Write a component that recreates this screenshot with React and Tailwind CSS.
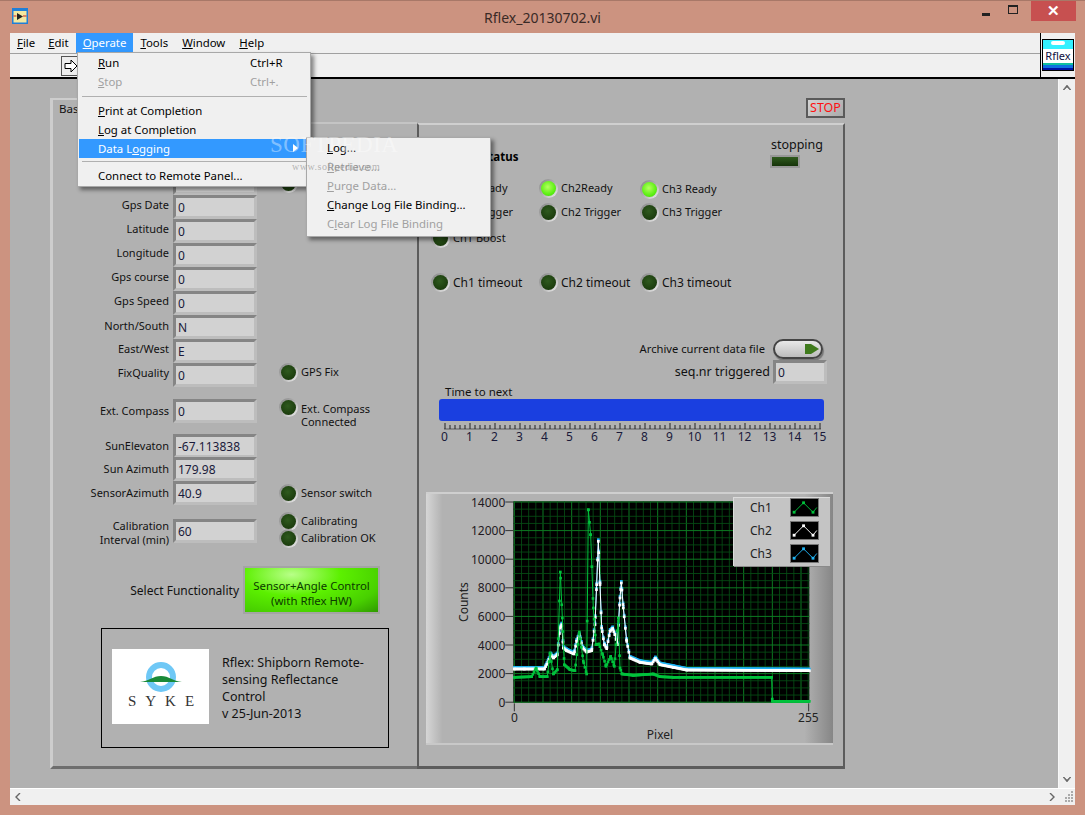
const font = "font-['Noto_Sans',sans-serif]"

// LabVIEW round LED
function Led({ on }) {
  return (
    <span className="flex h-[19px] w-[19px] shrink-0 items-center justify-center rounded-full bg-[linear-gradient(135deg,#858585,#b0b0b0_50%,#f2f2f2)]">
      <span className={on
        ? 'h-[15px] w-[15px] rounded-full bg-[radial-gradient(circle_at_45%_40%,#b4ff60,#5cf012_60%,#3cc808)]'
        : 'h-[15px] w-[15px] rounded-full bg-[radial-gradient(circle_at_45%_40%,#2f5a1e,#1c3d0e_70%,#122a08)]'} />
    </span>
  )
}

function Field({ value, className = 'w-[84px] h-[24px]' }) {
  return (
    <div className={`${className} shrink-0 border-[3px] border-t-[#858585] border-l-[#858585] border-r-[#bdbdbd] border-b-[#bdbdbd] bg-[#d2d2d2] pl-[2px] text-[12px] leading-[19px] text-[#1a1a3a]`}>
      {value}
    </div>
  )
}

function Row({ label, value, className = '', labelClass = 'pb-[4px]', children }) {
  return (
    <div className={`flex h-[24px] items-center ${className}`}>
      <div className={`w-[120px] pr-[1px] text-right text-[11px] leading-[14px] text-[#111] ${labelClass}`}>{label}</div>
      <div className="ml-[3px]"><Field value={value} /></div>
      {children}
    </div>
  )
}

function LedLabel({ text, on, className = '', textClass = 'text-[11px]' }) {
  return (
    <div className={`flex items-center gap-[3px] ${className}`}>
      <Led on={on} />
      <span className={`${textClass} whitespace-nowrap text-[#111]`}>{text}</span>
    </div>
  )
}

function MenuItem({ children, shortcut, disabled, active }) {
  return (
    <div className={`flex h-[19px] items-center pl-[19px] text-[11.4px] whitespace-nowrap ${active ? 'bg-[#3399ff] text-white' : disabled ? 'text-[#a0a0a0]' : 'text-black'}`}>
      <span className="w-[152px]">{children}</span>
      {shortcut && <span>{shortcut}</span>}
    </div>
  )
}

// spectrum traces, in zoomed chart coordinates
const ch2 = [[0,553],[30,553],[90,553],[102,530],[109,510],[117,520],[129,510],[137,430],[142,420],[147,490],[157,498],[179,508],[187,470],[195,450],[205,490],[217,502],[232,498],[242,420],[247,300],[252,170],[257,300],[262,430],[270,480],[277,492],[287,440],[295,432],[302,450],[309,480],[317,340],[321,295],[327,370],[337,470],[347,520],[377,533],[412,538],[423,522],[437,540],[477,548],[517,556],[885,558]]
const ch1 = [[0,578],[52,576],[65,550],[77,576],[99,576],[107,505],[117,568],[129,555],[138,262],[144,400],[150,540],[167,555],[182,558],[195,442],[207,530],[217,568],[222,75],[229,150],[237,370],[245,480],[254,478],[265,510],[275,545],[289,515],[300,545],[312,400],[317,550],[323,568],[357,572],[417,568],[437,576],[477,578],[772,578],[774,650],[885,650]]

function at(line, x) {
  for (let i = 1; i < line.length; i++) {
    if (x <= line[i][0]) {
      const [x0, y0] = line[i - 1]
      const [x1, y1] = line[i]
      return y0 + ((y1 - y0) * (x - x0)) / (x1 - x0)
    }
  }
  return line[line.length - 1][1]
}

function Trace({ line, color, dy = 0 }) {
  const samples = Array.from({ length: 255 }, (_, i) => [i * 3.47, at(line, i * 3.47)])
  const pts = [...samples, ...line].sort((a, b) => a[0] - b[0]).map(([x, y]) => [283 + x, y + dy])
  return (
    <g>
      <polyline points={pts.map(p => p.join(',')).join(' ')} fill="none" stroke={color} strokeWidth="3" />
      {pts.map((p, i) => <rect key={i} x={p[0] - 4} y={p[1] - 4} width="8" height="8" fill={color} />)}
    </g>
  )
}

function Chart() {
  const labels = ['14000', '12000', '10000', '8000', '6000', '4000', '2000', '0']
  const minorX = Array.from({ length: 42 }, (_, i) => 283 + i * 21.5)
  const minorY = Array.from({ length: 29 }, (_, i) => 52 + i * 21.45)
  return (
    <svg viewBox="18 22 1221 759" className="h-[253px] w-[407px]">
      <rect x="280" y="50" width="888" height="604" fill="#000" />
      {minorX.map(x => <line key={x} x1={x} x2={x} y1="50" y2="654" stroke={Math.round((x - 283) / 21.5) % 4 === 0 ? '#0d7a22' : '#064d14'} strokeWidth={Math.round((x - 283) / 21.5) % 4 === 0 ? 3 : 2.5} />)}
      {minorY.map(y => <line key={y} x1="280" x2="1168" y1={y} y2={y} stroke={Math.round((y - 52) / 21.45) % 4 === 0 ? '#0d7a22' : '#064d14'} strokeWidth={Math.round((y - 52) / 21.45) % 4 === 0 ? 3 : 2.5} />)}
      <Trace line={ch2} color="#20b4f4" dy={-5} />
      <Trace line={ch2} color="#ffffff" />
      <Trace line={ch1} color="#00c23c" />
      {labels.map((t, i) => (
        <g key={t}>
          <line x1="256" x2="280" y1={52 + i * 85.8} y2={52 + i * 85.8} stroke="#333" strokeWidth="3" />
          <text x="256" y={66 + i * 85.8} textAnchor="end" fontSize="36" fill="#221a22">{t}</text>
        </g>
      ))}
      <line x1="283" x2="283" y1="656" y2="680" stroke="#333" strokeWidth="3" />
      <line x1="1166" x2="1166" y1="656" y2="680" stroke="#333" strokeWidth="3" />
      <text x="283" y="712" textAnchor="middle" fontSize="36" fill="#222">0</text>
      <text x="1165" y="712" textAnchor="middle" fontSize="36" fill="#222">255</text>
      <text x="720" y="762" textAnchor="middle" fontSize="36" fill="#222">Pixel</text>
      <text x="143" y="352" textAnchor="middle" fontSize="36" fill="#222" transform="rotate(-90 143 352)">Counts</text>
    </svg>
  )
}

function Swatch({ color }) {
  return (
    <svg viewBox="0 0 28 18" className="h-[19px] w-[29px] border border-[#777] bg-black">
      <polyline points="3,14 13,4 23,14 27,9" fill="none" stroke={color} strokeWidth="1" />
      {[[3, 14], [13, 4], [23, 14]].map(([x, y]) => <rect key={x} x={x - 1.5} y={y - 1.5} width="3" height="3" fill={color} />)}
    </svg>
  )
}

function SykeLogo() {
  return (
    <div className="flex h-[75px] w-[97px] shrink-0 flex-col items-center bg-white pt-[13px]">
      <svg viewBox="0 0 44 30" className="h-[30px] w-[44px]">
        <circle cx="22" cy="15" r="12" fill="none" stroke="#6fc8f6" strokeWidth="6" />
        <path d="M1 20 C10 19 14 14 22 14 C30 14 34 19 43 20 Z" fill="#1a8a38" />
      </svg>
      <div className="mt-[1px] pl-[10px] font-['Liberation_Serif',serif] text-[15px] leading-[17px] tracking-[9px] text-[#333]">SYKE</div>
    </div>
  )
}

function TimeScale() {
  const ticks = Array.from({ length: 76 }, (_, i) => i)
  return (
    <div className="ml-[13px] w-[400px]">
      <svg viewBox="0 0 380 8" className="ml-[12px] h-[8px] w-[380px]">
        {ticks.map(i => <line key={i} x1={i * 5 + 1} x2={i * 5 + 1} y1={i % 5 === 0 ? 1 : 3} y2="7" stroke="#222" strokeWidth="1" />)}
        <line x1="0" x2="377" y1="7" y2="7" stroke="#222" strokeWidth="0.6" />
      </svg>
      <div className="flex text-[12px] leading-[14px] text-[#1a1a3a]">
        {ticks.filter(i => i % 5 === 0).map(i => <span key={i} className="w-[25px] text-center">{i / 5}</span>)}
      </div>
    </div>
  )
}

function LeftPanel() {
  return (
    <div className="relative h-[671px] w-[367px] shrink-0 border-b-[3px] border-l-[3px] border-b-[#6e6e6e] border-l-[#cdcdcd] pt-[73px]">
      {/* tab outline */}
      <div className="absolute -left-[3px] top-0 h-[2px] w-[120px] rounded-tl-[3px] bg-[#cdcdcd]" />
      <div className="absolute left-[110px] right-0 top-[24px] h-[2px] bg-[#c4c4c4]" />
      <div className="absolute left-[6px] top-[2px] text-[11.5px] text-[#111]">Basic</div>
      <div className="-ml-[3px]">
        <Row value="">
          <div className="ml-[22px]"><Led /></div>
        </Row>
        <Row label="Gps Date" value="0" />
        <Row label="Latitude" value="0" />
        <Row label="Longitude" value="0" />
        <Row label="Gps course" value="0" />
        <Row label="Gps Speed" value="0" />
        <Row label="North/South" value="N" labelClass="pb-[2px]" />
        <Row label="East/West" value="E" />
        <Row label="FixQuality" value="0">
          <LedLabel text="GPS Fix" className="mb-[5px] ml-[22px]" />
        </Row>
        <Row label="Ext. Compass" value="0" className="mt-[12px]" labelClass="">
          <div className="ml-[22px] flex items-start gap-[3px] pt-[4px]">
            <Led />
            <span className="whitespace-nowrap pt-[4px] text-[11px] leading-[13px] text-[#111]">Ext. Compass<br />Connected</span>
          </div>
        </Row>
        <Row label="SunElevaton" value="-67.113838" className="mt-[11px]" labelClass="" />
        <Row label="Sun Azimuth" value="179.98" className="-mt-[1px]" labelClass="" />
        <Row label="SensorAzimuth" value="40.9" labelClass="">
          <LedLabel text="Sensor switch" className="ml-[22px]" />
        </Row>
        <Row label={<>Calibration<br />Interval (min)</>} value="60" className="mt-[14px]" labelClass="pt-[4px]">
          <div className="mb-[2px] ml-[22px] flex flex-col">
            <LedLabel text="Calibrating" />
            <LedLabel text="Calibration OK" className="-mt-[2px]" />
          </div>
        </Row>
        <div className="mt-[23px] flex h-[48px] items-center">
          <div className="w-[193px] pr-[4px] pt-[2px] text-right text-[12px] text-[#111]">Select Functionality</div>
          <div className="flex h-[48px] w-[137px] flex-col items-center justify-center border-[2px] border-[#a4a4a4] bg-[radial-gradient(ellipse_at_35%_15%,#b8ff88,#5cf000_40%,#48d000_75%,#2f9a00)] pt-[6px] text-center text-[11.4px] leading-[15px] text-[#0b3a00]">
            <span>Sensor+Angle Control</span>
            <span>(with Rflex HW)</span>
          </div>
        </div>
        <div className="ml-[51px] mt-[14px] flex h-[120px] w-[288px] items-start gap-[13px] border border-black pl-[10px] pt-[20px]">
          <SykeLogo />
          <div className="mt-[5px] text-[12.5px] leading-[17px] text-[#111]">
            Rflex: Shipborn Remote-<br />sensing Reflectance<br />Control<br />v 25-Jun-2013
          </div>
        </div>
      </div>
    </div>
  )
}

function RightPanel() {
  const col = 'grid grid-cols-[108px_101px_auto] pl-[12px]'
  return (
    <div className="flex w-[428px] shrink-0 flex-col items-end">
      <div className="flex h-[20px] w-[39px] items-center justify-center border-2 border-[#5a5a5a] bg-[linear-gradient(135deg,#d4d4d4,#aaaaaa)] text-[12.5px] text-[#ff1010]">STOP</div>
      <div className="mt-[5px] h-[646px] w-full border-r-[2px] border-t-[2px] border-b-[3px] border-l-[2px] border-t-[#cfcfcf] border-r-[#5c5c5c] border-b-[#5c5c5c] border-l-[#5c5c5c]">
        <div className="flex h-[45px] items-start justify-between pr-[20px] pt-[11px]">
          <div className="ml-[63px] mt-[12px] text-[11.5px] font-bold text-black">Status</div>
          <div className="flex flex-col items-start">
            <span className="text-[12.5px] leading-[18px] text-[#111]">stopping</span>
            <span className="-ml-[1px] mt-[1px] h-[13px] w-[30px] border-[2px] border-[#989898] bg-[linear-gradient(180deg,#2f5a1e,#16340a)]" />
          </div>
        </div>
        <div className={`${col} mt-[7px] items-center`}>
          <LedLabel text="Ch1 Ready" />
          <LedLabel text="Ch2Ready" on />
          <LedLabel text="Ch3 Ready" on className="mt-[3px]" />
          <LedLabel text="Ch1 Trigger" className="mt-[4px]" />
          <LedLabel text="Ch2 Trigger" className="mt-[4px]" />
          <LedLabel text="Ch3 Trigger" className="mt-[4px]" />
          <LedLabel text="Ch1 Boost" className="mt-[7px]" />
        </div>
        <div className={`${col} mt-[25px]`}>
          <LedLabel text="Ch1 timeout" textClass="text-[12px]" />
          <LedLabel text="Ch2 timeout" textClass="text-[12px]" />
          <LedLabel text="Ch3 timeout" textClass="text-[12px]" />
        </div>
        <div className="mt-[46px] flex h-[22px] items-center justify-end pr-[20px]">
          <span className="text-[11.2px] text-[#111]">Archive current data file</span>
          <span className="ml-[8px] flex h-[20px] w-[50px] items-center justify-end rounded-full border-2 border-[#444] bg-[linear-gradient(180deg,#e8e8e8,#bcbcbc)] pr-[2px] shadow-[1px_2px_1px_#777]">
            <svg viewBox="0 0 14 10" className="h-[10px] w-[14px]"><path d="M0 0h6l8 5-8 5H0z" fill="#3f7a1c" /></svg>
          </span>
        </div>
        <div className="flex h-[24px] items-center justify-end pr-[16px]">
          <span className="text-[12.5px] text-[#111]">seq.nr triggered</span>
          <Field value="0" className="ml-[3px] h-[24px] w-[54px]" />
        </div>
        <div className="ml-[26px] mt-[1px] text-[11.5px] leading-[14px] text-[#111]">Time to next</div>
        <div className="ml-[20px] h-[22px] w-[385px] rounded-[3px] bg-[#1a3fe0]" />
        <div className="mt-[1px]"><TimeScale /></div>
        <div className="relative ml-[7px] mt-[48px] h-[253px] w-[407px] bg-[linear-gradient(90deg,#d6d6d6,#b2b2b2_4%,#b2b2b2_93%,#868686)] shadow-[inset_0_2px_0_#cfcfcf,inset_0_-2px_0_#c8c8c8]">
          <Chart />
          <div className="absolute left-[307px] top-[5px] h-[69px] w-[97px] border-l border-t border-[#dcdcdc] bg-[#c4c4c4] shadow-[1px_1px_0_#8a8a8a]">
            <div className="-mt-[2px]">
              {[['Ch1', '#00c23c'], ['Ch2', '#ffffff'], ['Ch3', '#20b4f4']].map(([name, color]) => (
                <div key={name} className="flex h-[23px] items-center justify-between pl-[16px] pr-[11px] text-[12px] text-[#222]">
                  <span>{name}</span>
                  <Swatch color={color} />
                </div>
              ))}
            </div>
          </div>
        </div>
      </div>
    </div>
  )
}

export default function App() {
  return (
    <div className={`relative flex h-[815px] w-[1085px] flex-col overflow-hidden border-t border-[#a87868] bg-[#cc9380] px-[10px] pb-[10px] ${font}`}>
      {/* Title bar */}
      <div className="relative flex h-[32px] shrink-0 items-center justify-center text-[14px] text-[#3a2a26]">
        <svg viewBox="0 0 16 16" className="absolute left-[2px] top-[7px] h-[16px] w-[16px]">
          <rect width="16" height="16" fill="#1f7fd8" />
          <rect x="1.5" y="3" width="13" height="11.5" fill="#f3e8a0" />
          <path d="M5 5l6 3.5-6 3.5z" fill="#222" />
          <path d="M1.5 8h3M11 8h3.5" stroke="#d02020" strokeWidth="1" />
        </svg>
        <span>Rflex_20130702.vi</span>
        <div className="absolute -right-[1px] -top-[1px] flex h-[21px] items-center">
          <span className="mb-[-8px] mr-[18px] h-[3px] w-[8px] bg-[#222]" />
          <span className="mb-[2px] mr-[13px] h-[9px] w-[10px] border border-t-[2px] border-[#222]" />
          <span className="flex h-[21px] w-[45px] items-center justify-center bg-[#c75050] text-[15px] font-bold text-white">✕</span>
        </div>
      </div>

      {/* Window client */}
      <div className="flex min-h-0 flex-1 flex-col bg-[#f0f0f0]">
        <div className="flex h-[46px] shrink-0 border-b-2 border-black">
          <div className="flex min-w-0 flex-1 flex-col">
            <div className="flex h-[21px] shrink-0 items-center border-b border-[#a0a0a0] pl-[1px] text-[11.4px] text-black">
              <span className="px-[6px]"><u>F</u>ile</span>
              <span className="px-[7px]"><u>E</u>dit</span>
              <span className="flex h-[20px] items-center bg-[#3399ff] px-[7px] text-white"><u>O</u>perate</span>
              <span className="px-[7px]"><u>T</u>ools</span>
              <span className="px-[7px]"><u>W</u>indow</span>
              <span className="px-[7px]"><u>H</u>elp</span>
            </div>
            <div className="flex flex-1 items-center pl-[51px]">
              <span className="flex h-[20px] w-[20px] items-center justify-center border border-[#555] bg-[#eee]">
                <svg viewBox="0 0 14 14" className="h-[14px] w-[14px]"><path d="M1 4.5h6V1l6 6-6 6V9.5H1z" fill="#fff" stroke="#000" strokeWidth="1" /></svg>
              </span>
            </div>
          </div>
          <div className="flex w-[35px] shrink-0 items-center justify-center border-l border-black">
            <div className="flex h-[32px] w-[32px] flex-col border border-black bg-white">
              <div className="h-[9px] bg-[#33f0ff]"><div className="mx-auto mt-[1px] h-[4px] w-[14px] rounded-full bg-white" /></div>
              <div className="h-[14px] text-center text-[11px] leading-[13px] text-[#101040]">Rflex</div>
              <div className="h-[2px] bg-[#10c0a0]" />
              <div className="h-[3px] bg-[#1070e0]" />
              <div className="h-[2px] bg-[#0010a0]" />
              <div className="flex-1 bg-[#333]" />
            </div>
          </div>
        </div>

        <div className="flex min-h-0 flex-1">
          {/* Front panel */}
          <div className="flex min-w-0 flex-1 items-start bg-[#b1b1b1] pl-[40px] pt-[19px]">
            <LeftPanel />
            <RightPanel />
          </div>
          <div className="flex w-[17px] shrink-0 flex-col items-center justify-between border-l border-[#f8f8f8] py-[5px] text-[#555]">
            <svg viewBox="0 0 8 6" className="h-[6px] w-[8px]"><path d="M0 6l4-5 4 5-1 0-3-3-3 3z" fill="#666" stroke="#666" strokeWidth=".6" /></svg>
            <svg viewBox="0 0 8 6" className="h-[6px] w-[8px]"><path d="M0 0l4 5 4-5-1 0-3 3-3-3z" fill="#666" stroke="#666" strokeWidth=".6" /></svg>
          </div>
        </div>

        <div className="flex h-[17px] shrink-0 items-center justify-between border-t border-white pl-[5px] pr-[2px]">
          <svg viewBox="0 0 6 8" className="h-[8px] w-[6px]"><path d="M5 0L1 4l4 4" fill="none" stroke="#666" strokeWidth="1.4" /></svg>
          <div className="flex items-center gap-[10px]">
            <svg viewBox="0 0 6 8" className="h-[8px] w-[6px]"><path d="M1 0l4 4-4 4" fill="none" stroke="#666" strokeWidth="1.4" /></svg>
            <svg viewBox="0 0 8 12" className="h-[12px] w-[8px]">
              {[[6, 0], [6, 3], [3, 3], [6, 6], [3, 6], [0, 6], [6, 9], [3, 9], [0, 9]].map(([x, y]) => <rect key={`${x}-${y}`} x={x} y={y} width="2" height="2" fill="#aaa" />)}
            </svg>
          </div>
        </div>
      </div>

      {/* Operate menu */}
      <div className="absolute left-[77px] top-[51px] z-10 h-[135px] w-[234px] border border-[#a8a8a8] bg-[#f0f0f0] pl-[1px] shadow-[3px_3px_4px_rgba(0,0,0,0.45)]">
        <MenuItem shortcut="Ctrl+R"><u>R</u>un</MenuItem>
        <MenuItem shortcut="Ctrl+." disabled><u>S</u>top</MenuItem>
        <div className="mx-[3px] mb-[4px] mt-[5px] h-px bg-[#b0b0b0]" />
        <MenuItem><u>P</u>rint at Completion</MenuItem>
        <MenuItem><u>L</u>og at Completion</MenuItem>
        <MenuItem active>Data L<u>o</u>gging</MenuItem>
        <div className="mx-[3px] my-[3px] h-px bg-[#b0b0b0]" />
        <div className="mt-[4px]"><MenuItem>Connect to Remote Panel...</MenuItem></div>
      </div>
      <div className="absolute left-[293px] top-[143px] z-20 h-0 w-0 border-y-[4px] border-l-[5px] border-y-transparent border-l-white" />

      {/* Data Logging submenu */}
      <div className="absolute left-[306px] top-[136px] z-20 h-[100px] w-[185px] border border-[#a8a8a8] bg-[#f0f0f0] pl-[1px] shadow-[3px_3px_4px_rgba(0,0,0,0.45)]">
        <MenuItem><u>L</u>og...</MenuItem>
        <MenuItem disabled><u>R</u>etrieve...</MenuItem>
        <MenuItem disabled><u>P</u>urge Data...</MenuItem>
        <MenuItem><u>C</u>hange Log File Binding...</MenuItem>
        <MenuItem disabled>C<u>l</u>ear Log File Binding</MenuItem>
      </div>

      {/* Watermark */}
      <div className="pointer-events-none absolute left-[270px] top-[128px] z-30 font-['Liberation_Serif',serif] text-[23px] leading-[32px] tracking-[0.5px] text-white/40">
        SOFTPEDIA
        <div className="-mt-[1px] pl-[22px] text-[10px] leading-[14px] text-[#888]/60">www.softpedia.com</div>
      </div>
    </div>
  )
}
